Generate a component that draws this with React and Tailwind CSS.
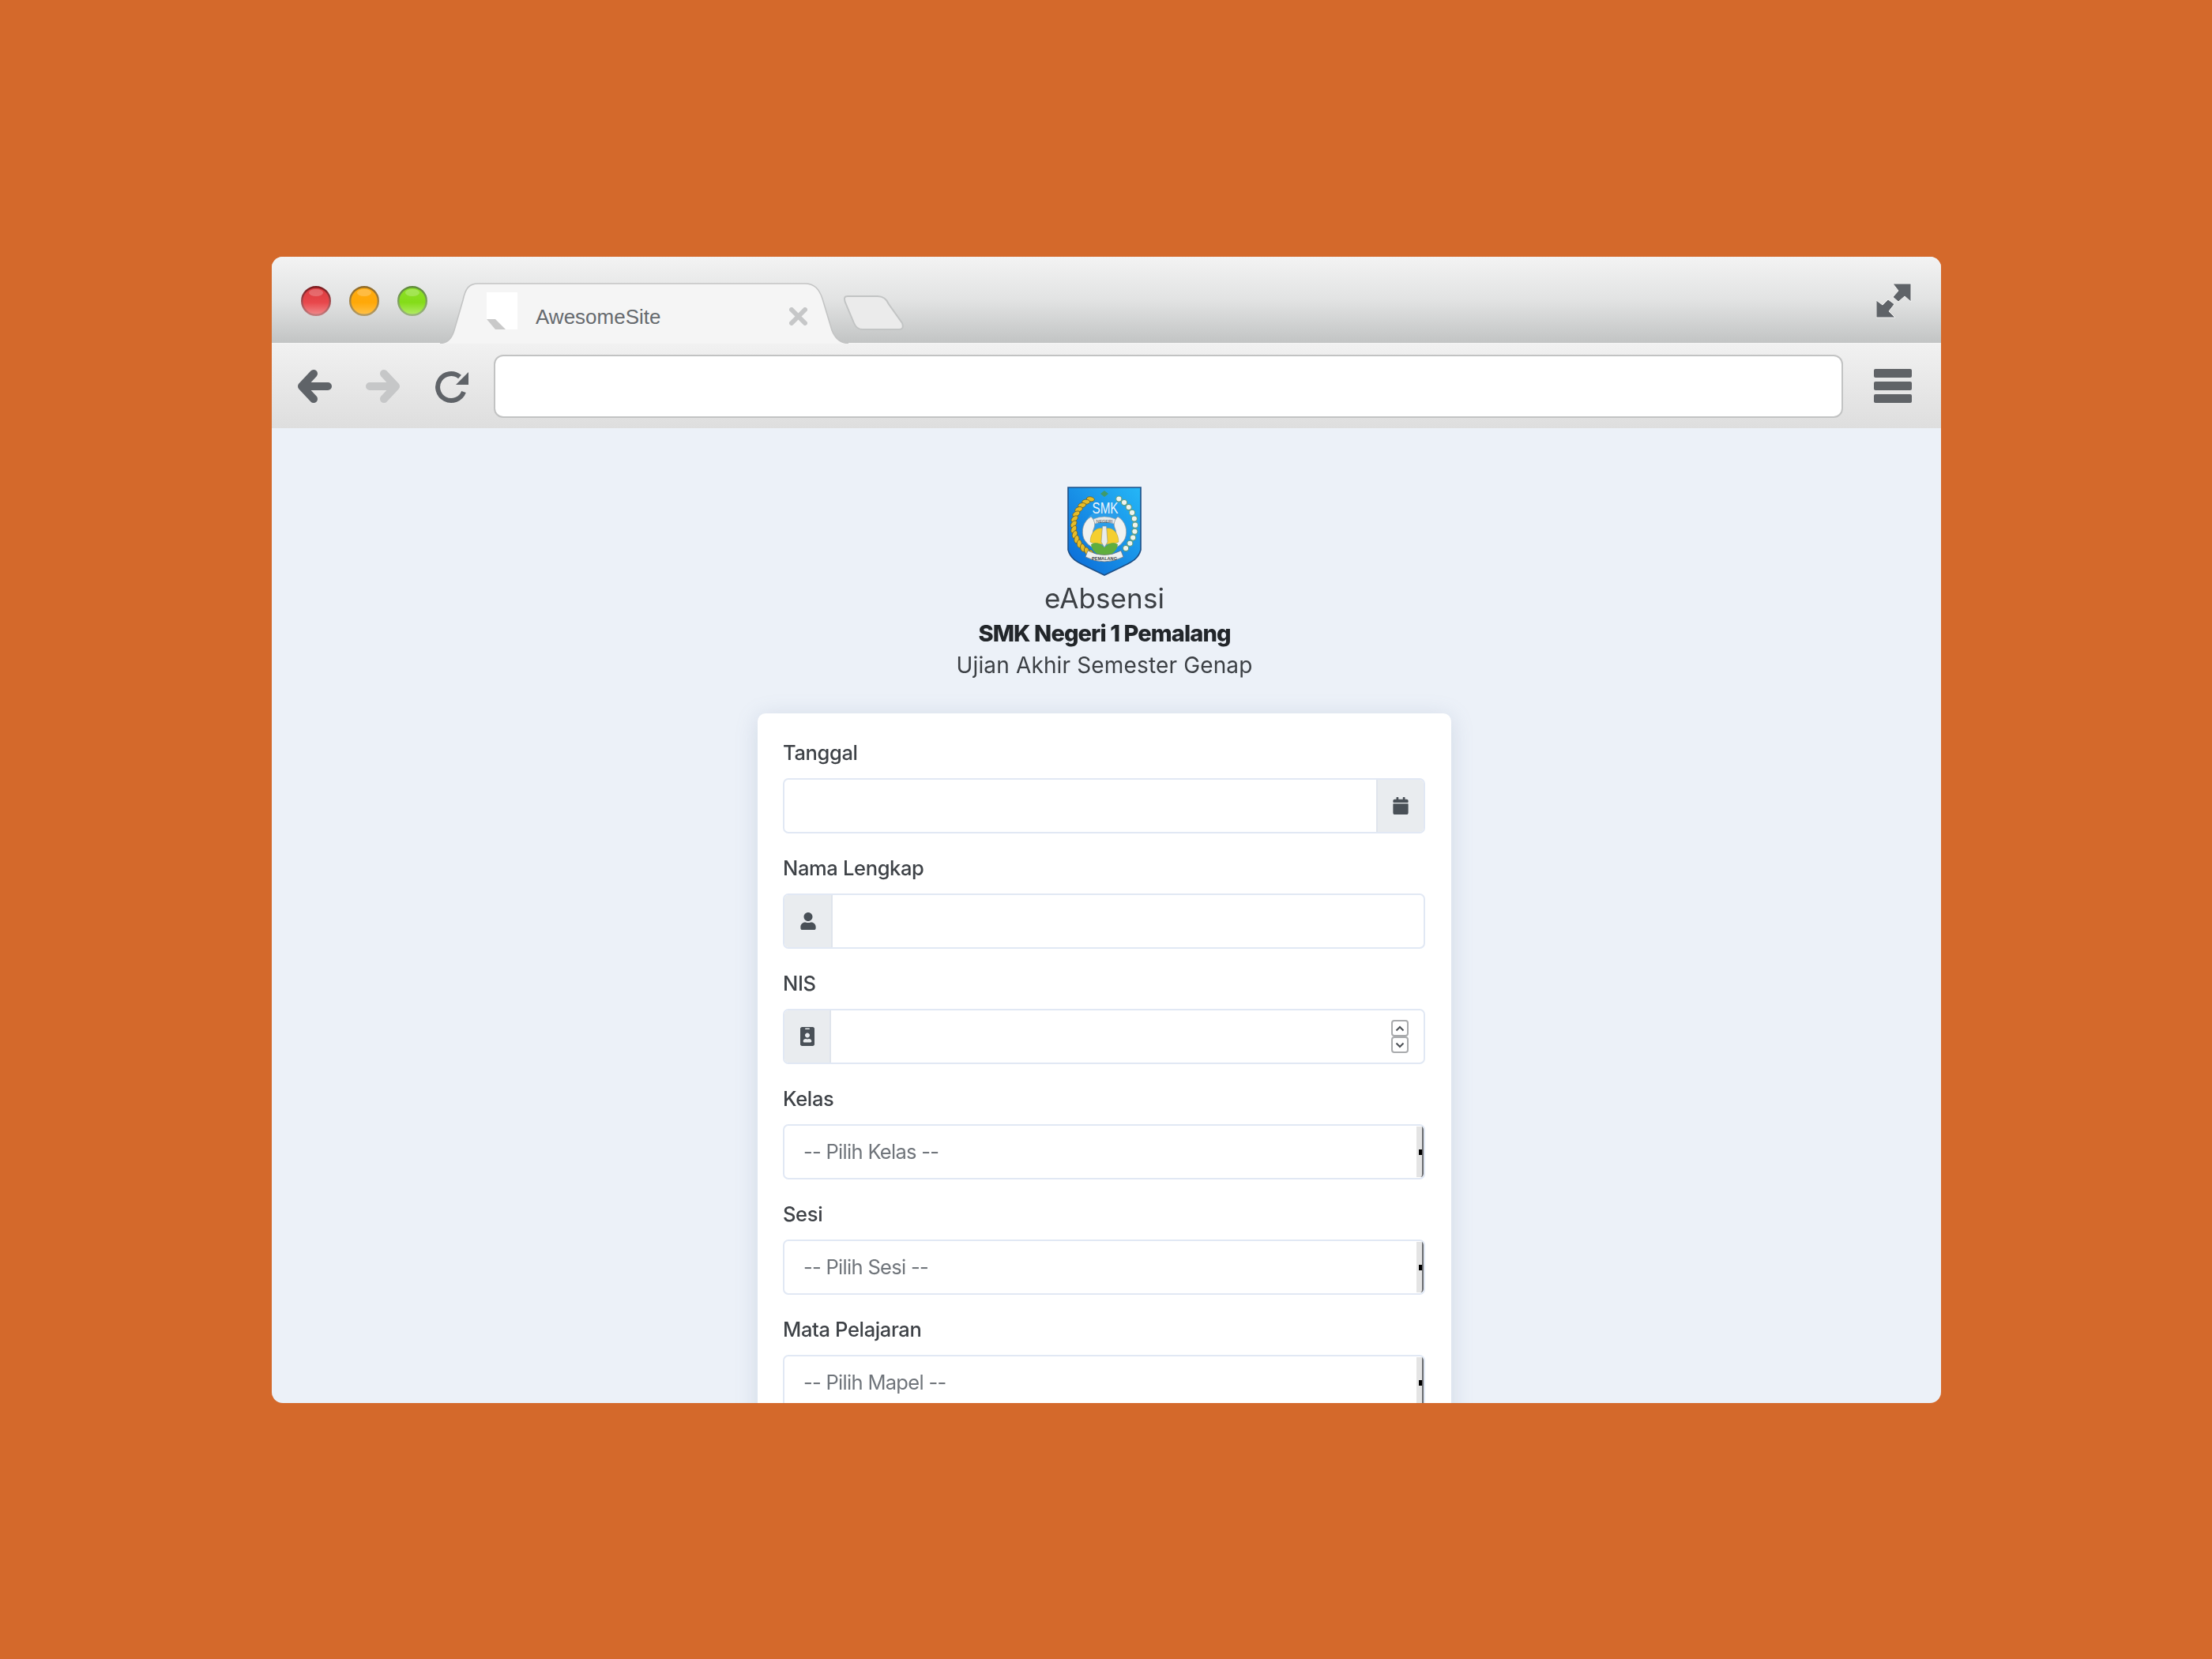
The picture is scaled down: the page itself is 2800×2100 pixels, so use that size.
import React from "react";
import { FaCalendar, FaUser, FaIdBadge } from "react-icons/fa";

function Light({ id, top, mid, light, ringTop, ringBottom }) {
  return (
    <svg width="38" height="38" viewBox="0 0 38 38" className="shrink-0">
      <defs>
        <linearGradient id={`f${id}`} x1="0" y1="0" x2="0" y2="1">
          <stop offset="0" stopColor={top} />
          <stop offset="0.55" stopColor={mid} />
          <stop offset="1" stopColor={light} />
        </linearGradient>
        <linearGradient id={`r${id}`} x1="0" y1="0" x2="0" y2="1">
          <stop offset="0" stopColor={ringTop} />
          <stop offset="1" stopColor={ringBottom} />
        </linearGradient>
      </defs>
      <circle cx="19" cy="19" r="17.8" fill={`url(#f${id})`} stroke={`url(#r${id})`} strokeWidth="2.4" />
      <ellipse cx="19" cy="8.5" rx="9" ry="4.5" fill="#ffffff" opacity="0.22" />
    </svg>
  );
}

function Arrow({ color, flip }) {
  return (
    <svg width="44" height="42" viewBox="0 0 44 42" className={flip ? "shrink-0 -scale-x-100" : "shrink-0"}>
      <path d="M21 5 L6 21 L21 37 M6 21 H39" fill="none" stroke={color} strokeWidth="10" strokeLinecap="round" strokeLinejoin="round" />
    </svg>
  );
}

function Logo() {
  const wheat = [];
  for (let i = 0; i < 14; i++) {
    const deg = 116 + i * 10;
    const a = (deg * Math.PI) / 180;
    const x = 46 + 38 * Math.cos(a);
    const y = 50 - 38 * Math.sin(a);
    wheat.push(<ellipse key={i} cx={x} cy={y} rx="5" ry="3" fill="#e6bc28" stroke="#6f6124" strokeWidth="0.8" transform={`rotate(${-(deg - 90) + 35} ${x} ${y})`} />);
  }
  const cotton = [];
  for (let i = 0; i < 10; i++) {
    const a = ((62 - i * 12) * Math.PI) / 180;
    const x = 47 + 39 * Math.cos(a);
    const y = 50 - 39 * Math.sin(a);
    cotton.push(<circle key={i} cx={x} cy={y} r="3.6" fill="#eef4ee" stroke="#5f9c7c" strokeWidth="1.1" />);
  }
  return (
    <svg width="94" height="113" viewBox="0 0 94 113" className="shrink-0">
      <defs>
        <linearGradient id="sh" x1="1" y1="0" x2="0" y2="1">
          <stop offset="0" stopColor="#25b7f7" />
          <stop offset="1" stopColor="#0a68d6" />
        </linearGradient>
      </defs>
      <path d="M1 1 H93 V80 C90 92 80 96 70 101 L47 112 L24 101 C14 96 4 92 1 80 Z" fill="url(#sh)" stroke="#1d4f86" strokeWidth="1.6" />
      <path d="M47 5 L52 9 L47 13 L42 9 Z" fill="#3f9a6b" />
      <circle cx="47" cy="55" r="26" fill="#2a9eea" />
      {wheat}
      {cotton}
      <text x="48" y="34" textAnchor="middle" fontFamily="Liberation Sans, sans-serif" fontSize="20" fill="#eef5fb" textLength="33" lengthAdjust="spacingAndGlyphs">SMK</text>
      <path d="M30 38 C20 44 17 56 21 66 C25 74 33 78 39 80 C33 70 30 60 34 52 C36 46 34 42 30 38 Z" fill="#f0f2f1" stroke="#8d9498" strokeWidth="0.8" />
      <path d="M64 38 C74 44 77 56 73 66 C69 74 61 78 55 80 C61 70 64 60 60 52 C58 46 60 42 64 38 Z" fill="#f0f2f1" stroke="#8d9498" strokeWidth="0.8" />
      <path d="M33 41 Q47 35 61 41 L59 47 Q47 43 35 47 Z" fill="#e6eaea" stroke="#8d9498" strokeWidth="0.5" />
      <text x="47" y="46" textAnchor="middle" fontFamily="Liberation Sans, sans-serif" fontSize="5.5" fill="#4b5157">NEGERI</text>
      <path d="M29 70 C29 57 38 51 45 53 L46 74 C40 71 34 73 29 70 Z" fill="#f5cf2f" stroke="#8d8a4a" strokeWidth="0.4" />
      <path d="M65 70 C65 57 56 51 49 53 L48 74 C54 71 60 73 65 70 Z" fill="#f5cf2f" stroke="#8d8a4a" strokeWidth="0.4" />
      <path d="M30 73 Q38 68 47 77 Q56 68 64 73 Q62 86 47 88 Q32 86 30 73 Z" fill="#5fae3e" />
      <path d="M44.5 50 H49.5 L51 70 L47 77 L43 70 Z" fill="#e8ecec" stroke="#7b8287" strokeWidth="0.5" />
      <path d="M26 81 Q47 92 68 81 L71 89 Q47 101 23 89 Z" fill="#eef1ef" stroke="#6d7479" strokeWidth="0.8" />
      <text x="47" y="93" textAnchor="middle" fontFamily="Liberation Sans, sans-serif" fontSize="5.6" fontWeight="700" fill="#3d4347">PEMALANG</text>
    </svg>
  );
}

function Field({ label, children }) {
  return (
    <div className="mb-[26px]">
      <div className="h-[36px] mb-[14px] text-[25.5px] font-medium leading-[36px] text-[#3e4247] tracking-[-0.35px]">{label}</div>
      {children}
    </div>
  );
}

function Addon({ left, width, children }) {
  return (
    <div className={`${width} flex items-center justify-center bg-[#e9ecef] text-[#495057] ${left ? "border-r-2 border-[#dfe4ec]" : "border-l-2 border-[#dfe4ec]"}`}>
      {children}
    </div>
  );
}

function Box({ children }) {
  return (
    <div className="flex h-[70px] rounded-[7px] border-[2px] border-[#e1e8f4] bg-white overflow-hidden">{children}</div>
  );
}

function SelectBox({ text }) {
  return (
    <div className="flex h-[70px] rounded-[7px] border-[2px] border-[#e1e8f4] bg-white overflow-hidden items-stretch">
      <div className="flex-1 flex items-center pl-[24px] text-[25.5px] text-[#70757b] tracking-[-0.7px]">{text}</div>
      <div className="w-[9px] my-[1px] bg-[#e4e4e4] border-r-[2px] border-[#6a6c70] rounded-br-[4px] flex items-center justify-end">
        <div className="w-[4px] h-[7px] bg-black" />
      </div>
    </div>
  );
}

export default function App() {
  return (
    <div className="w-[2800px] h-[2100px] bg-[#d4692b] pt-[325px] pl-[344px]">
      <div className="w-[2113px] h-[1451px] rounded-[14px] overflow-hidden flex flex-col bg-[#ecf1f8] blur-[0.5px]">
        <div className="h-[110px] shrink-0 flex items-start bg-gradient-to-b from-[#f3f3f3] via-[#e2e3e3] to-[#c2c4c4] border-b border-[#f4f4f4]">
          <div className="flex gap-[23px] ml-[37px] mt-[37px]">
            <Light id="a" top="#d93a3e" mid="#e8474b" light="#f08a8c" ringTop="#7a1a1e" ringBottom="#c47a7c" />
            <Light id="b" top="#ffab10" mid="#ffa808" light="#ffc24a" ringTop="#8f6a28" ringBottom="#b39a62" />
            <Light id="c" top="#8ee02a" mid="#84dc18" light="#b4ec68" ringTop="#5f8a3c" ringBottom="#9ab47c" />
          </div>
          <div className="relative w-[517px] h-[77px] ml-[16px] mt-[33px] shrink-0">
            <svg width="517" height="77" viewBox="0 0 517 77" className="absolute inset-0">
              <path d="M0 77 C10 77 15 70 18 60 L29 22 C32 8 36 1 48 1 L462 1 C474 1 480 8 484 20 L496 60 C500 70 507 77 517 77 Z" fill="#f5f5f5" />
              <path d="M0 76.5 C10 76.5 15 70 18 60 L29 22 C32 8 36 1 48 1 L462 1 C474 1 480 8 484 20 L496 60 C500 70 507 76.5 517 76.5" fill="none" stroke="#c3c4c4" strokeWidth="1.6" />
            </svg>
            <div className="relative flex items-center h-full">
              <svg width="39" height="47" viewBox="0 0 39 47" className="ml-[59px] mb-[6px] shrink-0">
                <path d="M0 0 H39 V47 H11 L0 34 Z" fill="#ffffff" />
                <path d="M0 34 H11 L24 47 H11 Z" fill="#c9c9c9" />
              </svg>
              <span className="ml-[23px] mt-[8px] font-['Liberation_Sans',Arial,sans-serif] text-[26px] leading-[30px] text-[#666a6e]">AwesomeSite</span>
              <svg width="23" height="23" viewBox="0 0 23 23" className="ml-[162px] mt-[7px] shrink-0">
                <path d="M3 3 L20 20 M20 3 L3 20" stroke="#c6c7c8" strokeWidth="6" strokeLinecap="round" />
              </svg>
            </div>
          </div>
          <svg width="79" height="45" viewBox="0 0 79 45" className="-ml-[7px] mt-[49px] shrink-0">
            <path d="M6 1 H44 C51 1 55 4 58 11 L75 35 C77 41 75 43 71 43 H25 C19 43 16 40 14 35 L3 9 C1 3 2 1 6 1 Z" fill="#ebebeb" stroke="#c2c4c4" strokeWidth="2" />
          </svg>
          <svg width="46" height="46" viewBox="0 0 46 46" className="ml-auto mr-[36px] mt-[33px] shrink-0">
            <path d="M21 1 H44 V24 L36 17 L28 24 L21 18 L28 10 Z" fill="#5f6368" stroke="#f2f2f2" strokeWidth="1" />
            <path d="M0 22 L8 28 L15 21 L23 27 L16 36 L24 44 H0 Z" fill="#5f6368" stroke="#f2f2f2" strokeWidth="1" />
          </svg>
        </div>

        <div className="h-[107px] shrink-0 flex items-center pl-[32px] pr-[37px] bg-gradient-to-b from-[#f1f1f1] to-[#dedede]">
          <Arrow color="#5f6368" />
          <div className="ml-[43px]"><Arrow color="#c6c7c8" flip /></div>
          <svg width="44" height="44" viewBox="0 0 44 44" className="ml-[42px] shrink-0">
            <path d="M33 10 A17 17 0 1 0 38 29" fill="none" stroke="#5f6368" strokeWidth="6" />
            <path d="M44 4 V20 H28 Z" fill="#5f6368" />
          </svg>
          <div className="ml-[32px] w-[1708px] h-[80px] rounded-[12px] bg-white border-[2px] border-[#c2c3c3]" />
          <div className="ml-[39px] flex flex-col gap-[5px]">
            <div className="w-[48px] h-[11px] rounded-[2px] bg-[#606367]" />
            <div className="w-[48px] h-[11px] rounded-[2px] bg-[#606367]" />
            <div className="w-[48px] h-[11px] rounded-[2px] bg-[#606367]" />
          </div>
        </div>

        <div className="flex-1 min-h-0 overflow-hidden flex flex-col items-center pt-[74px] pr-[5px] font-['Inter',sans-serif] text-[#3c4045]">
          <Logo />
          <div className="h-[55px] shrink-0 leading-[56px] text-[35px] tracking-[0.1px]">eAbsensi</div>
          <div className="h-[37px] shrink-0 leading-[36px] text-[29px] font-extrabold text-[#22262a] tracking-[-0.9px]">SMK Negeri 1 Pemalang</div>
          <div className="h-[42px] shrink-0 leading-[42px] text-[28px] tracking-[0.15px]">Ujian Akhir Semester Genap</div>
          <div className="mt-[40px] w-[878px] shrink-0 rounded-[10px] bg-white pt-[32px] pl-[32px] pr-[33px] shadow-[0_4px_28px_rgba(110,130,170,0.22)]">
            <Field label="Tanggal">
              <Box>
                <div className="flex-1" />
                <Addon width="w-[60px]"><FaCalendar size={22} /></Addon>
              </Box>
            </Field>
            <Field label="Nama Lengkap">
              <Box>
                <Addon left width="w-[61px]"><FaUser size={22} /></Addon>
                <div className="flex-1" />
              </Box>
            </Field>
            <Field label="NIS">
              <Box>
                <Addon left width="w-[59px]"><FaIdBadge size={24} /></Addon>
                <div className="flex-1" />
                <div className="flex flex-col justify-center mr-[19px]">
                  <div className="w-[22px] h-[21px] rounded-[4px] border-[2px] border-[#a9abad] flex items-center justify-center text-[#4c5055]">
                    <svg width="12" height="8" viewBox="0 0 12 8"><path d="M1.5 6.5 L6 2 L10.5 6.5" fill="none" stroke="currentColor" strokeWidth="2" /></svg>
                  </div>
                  <div className="w-[22px] h-[21px] rounded-[4px] border-[2px] border-[#a9abad] flex items-center justify-center text-[#4c5055]">
                    <svg width="12" height="8" viewBox="0 0 12 8"><path d="M1.5 1.5 L6 6 L10.5 1.5" fill="none" stroke="currentColor" strokeWidth="2" /></svg>
                  </div>
                </div>
              </Box>
            </Field>
            <Field label="Kelas"><SelectBox text="-- Pilih Kelas --" /></Field>
            <Field label="Sesi"><SelectBox text="-- Pilih Sesi --" /></Field>
            <Field label="Mata Pelajaran"><SelectBox text="-- Pilih Mapel --" /></Field>
          </div>
        </div>
      </div>
    </div>
  );
}
